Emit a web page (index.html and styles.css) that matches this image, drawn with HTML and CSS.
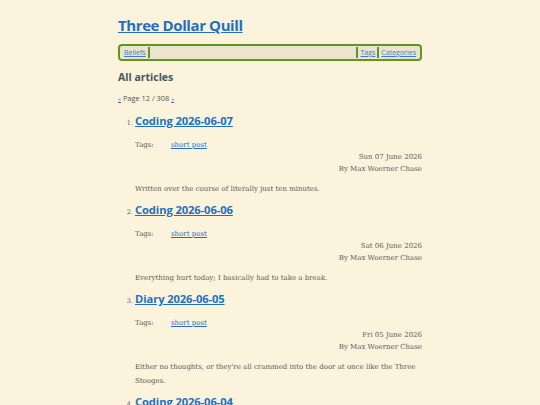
FILE: index.html
```html
<!DOCTYPE html>
<html lang="en">
<head>
    <meta charset="UTF-8">
    <meta name="viewport" content="width=device-width, initial-scale=1.0">
    <title>Three Dollar Quill</title>
    <link rel="stylesheet" href="styles.css">
</head>
<body>
    <div class="page">
        <h1 class="site-title"><a href="#">Three Dollar Quill</a></h1>

        <nav class="menu">
            <a href="#">Beliefs</a>
            <span class="menu-fill"></span>
            <a href="#">Tags</a>
            <a href="#">Categories</a>
        </nav>

        <h2 class="section-title">All articles</h2>
        <p class="pager"><a href="#">&laquo;</a> Page 12 / 308 <a href="#">&raquo;</a></p>

        <ol class="articles" start="1">
            <li>
                <h3><a href="#">Coding 2026-06-07</a></h3>
                <div class="tags"><span>Tags:</span><a href="#">short post</a></div>
                <div class="meta">Sun 07 June 2026<br>By Max Woerner Chase</div>
                <p class="summary">Written over the course of literally just ten minutes.</p>
            </li>
            <li>
                <h3><a href="#">Coding 2026-06-06</a></h3>
                <div class="tags"><span>Tags:</span><a href="#">short post</a></div>
                <div class="meta">Sat 06 June 2026<br>By Max Woerner Chase</div>
                <p class="summary">Everything hurt today; I basically had to take a break.</p>
            </li>
            <li>
                <h3><a href="#">Diary 2026-06-05</a></h3>
                <div class="tags"><span>Tags:</span><a href="#">short post</a></div>
                <div class="meta">Fri 05 June 2026<br>By Max Woerner Chase</div>
                <p class="summary">Either no thoughts, or they're all crammed into the door at once like the Three Stooges.</p>
            </li>
            <li>
                <h3><a href="#">Coding 2026-06-04</a></h3>
                <div class="tags"><span>Tags:</span><a href="#">short post</a></div>
                <div class="meta">Thu 04 June 2026<br>By Max Woerner Chase</div>
                <p class="summary">More notes.</p>
            </li>
        </ol>
    </div>
</body>
</html>
```

FILE: styles.css
```css
body {
    margin: 0;
    background-color: #fbf3dc;
    color: #5a5a5a;
    font-family: "DejaVu Serif", serif;
    font-size: 7px;
}
a {
    color: #1f70bf;
}
.page {
    width: 304px;
    margin: 0 auto;
    padding-top: 13px;
}
.site-title {
    margin: 0;
    font-family: "Open Sans", sans-serif;
    font-size: 15px;
    font-weight: 700;
    letter-spacing: -0.4px;
    line-height: 24px;
}
.menu {
    display: flex;
    align-items: center;
    margin-top: 7px;
    padding: 1px 2px;
    background: #ebe4cf;
    border: 2px solid #62951f;
    border-radius: 4px;
    font-family: "Open Sans", sans-serif;
    font-size: 7px;
    line-height: 11px;
}
.menu a {
    padding: 0 2px;
    color: #3f7fc0;
}
.menu-fill {
    flex: 1;
    align-self: stretch;
    border-left: 2px solid #62951f;
    border-right: 2px solid #62951f;
}
.menu a + a {
    border-left: 2px solid #62951f;
}
.section-title {
    margin: 8px 0 0;
    font-family: "Open Sans", sans-serif;
    font-size: 10.5px;
    font-weight: 700;
    color: #4a5761;
    line-height: 16px;
}
.pager {
    margin: 8px 0 0;
    font-family: "Open Sans", sans-serif;
    font-size: 7.4px;
    color: #555;
}
.pager a {
    font-size: 6px;
}
.articles {
    margin: 9px 0 0;
    padding-left: 17px;
}
.articles li {
    margin-bottom: 5.5px;
}
.articles li::marker {
    font-size: 6.5px;
}
.articles h3 {
    margin: 0;
    font-family: "Open Sans", sans-serif;
    font-size: 11.2px;
    font-weight: 700;
    letter-spacing: -0.1px;
    line-height: 17px;
}
.tags {
    display: flex;
    margin-top: 9.5px;
    line-height: 12px;
}
.tags span {
    width: 36px;
}
.meta {
    text-align: right;
    line-height: 12px;
}
.summary {
    margin: 7px 0 0;
    line-height: 14px;
}
```
